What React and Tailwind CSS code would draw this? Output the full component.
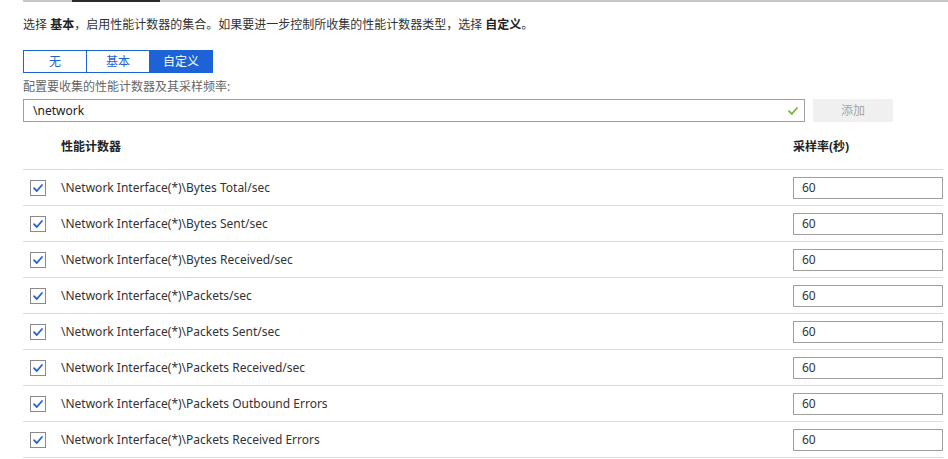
import { useState } from 'react';

const counters = [
    '\\Network Interface(*)\\Bytes Total/sec',
    '\\Network Interface(*)\\Bytes Sent/sec',
    '\\Network Interface(*)\\Bytes Received/sec',
    '\\Network Interface(*)\\Packets/sec',
    '\\Network Interface(*)\\Packets Sent/sec',
    '\\Network Interface(*)\\Packets Received/sec',
    '\\Network Interface(*)\\Packets Outbound Errors',
    '\\Network Interface(*)\\Packets Received Errors',
];

const font = { fontFamily: '"Segoe UI", "Noto Sans", "Noto Sans CJK SC", sans-serif' };

const Check = ({ className }) => (
    <svg viewBox="0 0 12 12" className={className} fill="none">
        <path d="M2 6.2 L4.8 9 L10 3" stroke="currentColor" strokeWidth="1.8" strokeLinecap="round" strokeLinejoin="round" />
    </svg>
);

const App = () => {
    const [mode, setMode] = useState('custom');
    const modes = [
        { key: 'none', label: '无' },
        { key: 'basic', label: '基本' },
        { key: 'custom', label: '自定义' },
    ];

    return (
        <div className="w-[948px] h-[459px] overflow-hidden bg-white text-[12px] text-[#333]" style={font}>
            {/* top tab line */}
            <div className="ml-[23px] flex h-[2px] bg-[#c8c8c8]">
                <div className="ml-[49px] w-[88px] h-[2px] bg-[#2b2b2b]" />
            </div>

            <div className="pl-[23px] pr-[5px]">
                <p className="mt-[15px] leading-[16px]">
                    选择 <b className="font-bold text-[#222]">基本</b>，启用性能计数器的集合。如果要进一步控制所收集的性能计数器类型，选择 <b className="font-bold text-[#222]">自定义</b>。
                </p>

                <div className="mt-[17px] flex w-[190px] h-[23px] border border-[#1e62d8]">
                    {modes.map((m, i) => (
                        <button
                            key={m.key}
                            onClick={() => setMode(m.key)}
                            className={`flex-1 flex items-center justify-center leading-none ${i > 0 ? 'border-l border-[#1e62d8]' : ''} ${mode === m.key ? 'bg-[#1e62d8] text-white' : 'bg-white text-[#1e62d8]'}`}
                        >
                            {m.label}
                        </button>
                    ))}
                </div>

                <div className="mt-[6px] leading-[16px] text-[#666]">配置要收集的性能计数器及其采样频率:</div>

                <div className="mt-[4px] flex items-center gap-[8px]">
                    <div className="w-[782px] h-[23px] border border-[#a0a0a0] flex items-center pl-[9px] pr-[5px]">
                        <span className="flex-1 text-[#222]">\network</span>
                        <Check className="w-[12px] h-[12px] text-[#7ab829]" />
                    </div>
                    <button className="w-[80px] h-[23px] bg-[#f0f0f0] text-[#a6a6a6]">添加</button>
                </div>

                <div className="mt-[3px] w-[920px]">
                    <div className="flex items-center h-[45px] border-b border-[#dcdcdc] font-bold text-[#222]">
                        <div className="flex-1 pl-[38px]">性能计数器</div>
                        <div className="w-[150px]">采样率(秒)</div>
                    </div>
                    {counters.map((c) => (
                        <div key={c} className="flex items-center h-[36px] border-b border-[#dcdcdc]">
                            <div className="ml-[7px] w-[16px] h-[16px] border border-[#8a8a8a] flex items-center justify-center">
                                <Check className="w-[12px] h-[12px] text-[#1e62d8]" />
                            </div>
                            <div className="flex-1 pl-[15px] text-[#333]">{c}</div>
                            <div className="w-[150px] h-[22px] border border-[#a0a0a0] flex items-center pl-[8px] text-[#333]">60</div>
                        </div>
                    ))}
                </div>
            </div>
        </div>
    );
};

export default App;
